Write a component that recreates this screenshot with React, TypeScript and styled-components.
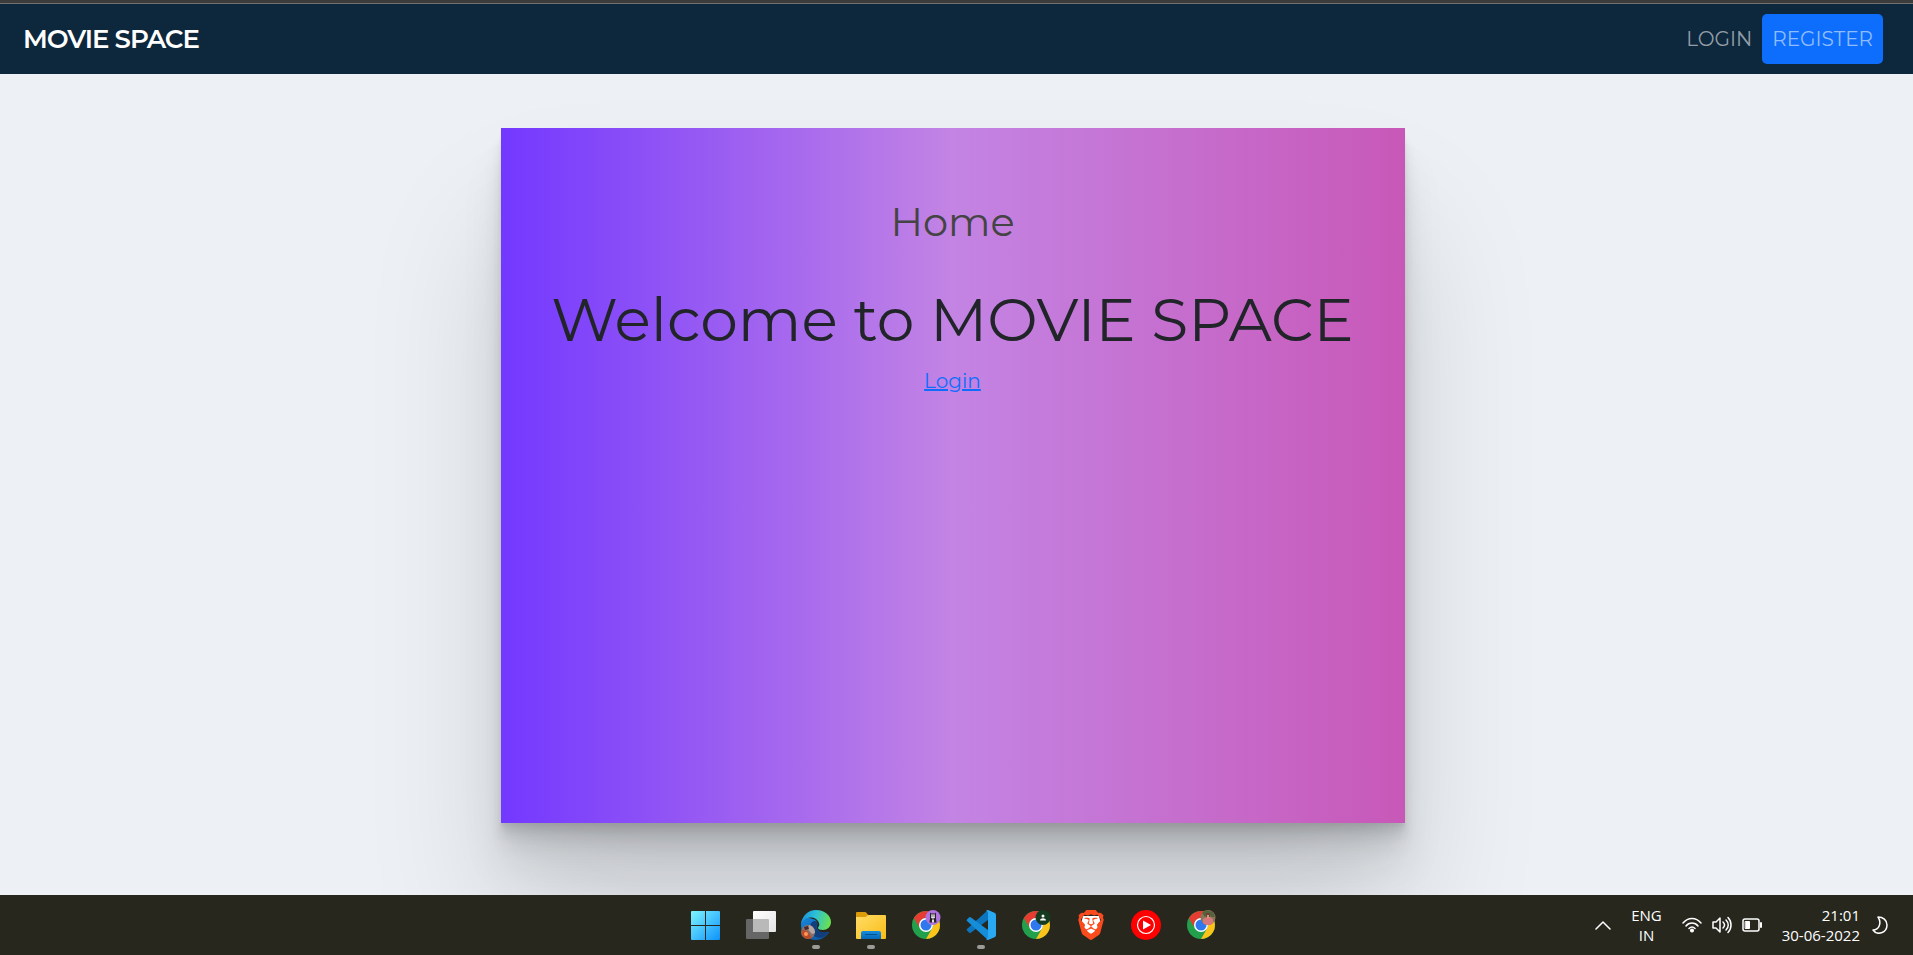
import React from 'react';
import styled, { createGlobalStyle } from 'styled-components';
import { SiBrave } from 'react-icons/si';

const GlobalStyle = createGlobalStyle`
  *, *::before, *::after { box-sizing: border-box; }
  body {
    margin: 0;
    background: #edf1f6;
    color: #212529;
    font-family: Montserrat, Inter, "Liberation Sans", sans-serif;
    font-weight: 400;
  }
`;

const Screen = styled.div`
  display: flex;
  flex-direction: column;
  min-height: 100vh;
`;

const WindowEdge = styled.div`
  height: 4px;
  background: #3c3c3c;
  border-bottom: 1px solid #717171;
`;

const NavBar = styled.nav`
  display: flex;
  align-items: center;
  justify-content: space-between;
  min-height: 70px;
  padding: 10px 30px 10px 23px;
  background: #0d273d;
`;

const Brand = styled.a`
  color: #fff;
  font-size: 26px;
  line-height: 40px;
  font-weight: 600;
  letter-spacing: -1px;
  text-decoration: none;
`;

const NavLinks = styled.div`
  display: flex;
  align-items: center;
`;

const NavLink = styled.a<{ $filled?: boolean }>`
  padding: 10px;
  border-radius: 5px;
  background: ${(p) => (p.$filled ? '#0d6efd' : 'transparent')};
  color: ${(p) => (p.$filled ? '#8fbcfc' : '#929da7')};
  font-size: 20px;
  line-height: 30px;
  font-weight: 400;
  text-decoration: none;
`;

const Main = styled.main`
  flex: 1;
  display: flex;
  justify-content: center;
  align-items: flex-start;
  padding: 54px 8px 72px 0;
  overflow: hidden;
`;

const Card = styled.section`
  width: min(904px, 100%);
  min-height: 695px;
  padding: 64px 20px;
  text-align: center;
  background: linear-gradient(90deg, #7338ff 0%, #c384e4 50%, #c858b8 100%);
  box-shadow:
    0 3px 2px rgba(0, 0, 0, 0.034),
    0 7px 5px rgba(0, 0, 0, 0.048),
    0 13px 10px rgba(0, 0, 0, 0.06),
    0 22px 18px rgba(0, 0, 0, 0.072),
    0 42px 40px rgba(0, 0, 0, 0.08),
    0 100px 130px rgba(0, 0, 0, 0.14);
`;

const PageTitle = styled.h2`
  margin: 0 0 28px;
  color: #444;
  font-size: 40px;
  line-height: 60px;
  font-weight: 400;
`;

const Welcome = styled.h1`
  margin: 0 0 6px;
  font-size: 60px;
  line-height: 80px;
  font-weight: 400;
`;

const LoginLink = styled.a`
  color: #0d6efd;
  font-size: 20px;
  line-height: 30px;
`;

const TaskBar = styled.footer`
  display: grid;
  grid-template-columns: 1fr auto 1fr;
  align-items: center;
  min-height: 60px;
  padding: 0 25px 0 18px;
  background: #27271e;
  color: #fff;
`;

const Apps = styled.div`
  grid-column: 2;
  display: flex;
  gap: 25px;
`;

const AppButton = styled.button<{ $open?: boolean }>`
  position: relative;
  display: flex;
  width: 30px;
  height: 30px;
  padding: 0;
  border: 0;
  background: none;

  &::after {
    content: '';
    display: ${(p) => (p.$open ? 'block' : 'none')};
    position: absolute;
    left: 11px;
    top: 35px;
    width: 8px;
    height: 4px;
    border-radius: 2px;
    background: #9b9b97;
  }
`;

const Tray = styled.div`
  display: flex;
  align-items: center;
  justify-content: flex-end;
  gap: 20px;
  font-family: "Open Sans", "Noto Sans", sans-serif;
  font-size: 15px;
  line-height: 20px;
  font-weight: 400;
`;

const TrayGroup = styled.div<{ $gap: number }>`
  display: flex;
  align-items: center;
  gap: ${(p) => p.$gap}px;
`;

const TrayText = styled.div<{ $align: 'center' | 'right' }>`
  display: flex;
  flex-direction: column;
  text-align: ${(p) => p.$align};
`;

const TraySvg = styled.svg`
  display: block;
  fill: none;
  stroke: #fff;
  stroke-width: 1.5;
  stroke-linecap: round;
  stroke-linejoin: round;
`;

const BraveMark = styled.span`
  position: relative;
  display: flex;
  width: 30px;
  height: 30px;
  color: #fb4a1c;

  svg { position: absolute; inset: 0; }
`;

const AppSvg = ({ children }: { children: React.ReactNode }) => (
  <svg width="30" height="30" viewBox="0 0 30 30" overflow="visible" aria-hidden="true">
    {children}
  </svg>
);

const WindowsIcon = () => (
  <AppSvg>
    <defs>
      <linearGradient id="win" gradientUnits="userSpaceOnUse" x1="1" y1="1" x2="29" y2="29">
        <stop offset="0" stopColor="#7df3ff" />
        <stop offset="1" stopColor="#0f94fb" />
      </linearGradient>
    </defs>
    <path fill="url(#win)" d="M1 1h13v14H0V2a1 1 0 0 1 1-1zM15 1h13a1 1 0 0 1 1 1v13H15zM0 16h14v14H1a1 1 0 0 1-1-1zM15 16h14v13a1 1 0 0 1-1 1H15z" />
  </AppSvg>
);

const TaskViewIcon = () => (
  <AppSvg>
    <defs>
      <linearGradient id="tv" x1="0" y1="0" x2="1" y2="1">
        <stop offset="0" stopColor="#fff" />
        <stop offset="1" stopColor="#e4e4e4" />
      </linearGradient>
    </defs>
    <rect x="0" y="9" width="23" height="20" rx="1" fill="#666" />
    <rect x="7" y="1" width="23" height="21" rx="1" fill="url(#tv)" />
    <path d="M7 9h15a1 1 0 0 1 1 1v12H8a1 1 0 0 1-1-1z" fill="#b9b9b9" />
  </AppSvg>
);

const EdgeIcon = () => (
  <AppSvg>
    <defs>
      <linearGradient id="edgeTop" x1="0" y1="0.3" x2="1" y2="0.5">
        <stop offset="0" stopColor="#1b8fd8" />
        <stop offset="0.45" stopColor="#2cc0d9" />
        <stop offset="1" stopColor="#6be14c" />
      </linearGradient>
      <linearGradient id="edgeLow" x1="0" y1="0" x2="1" y2="1">
        <stop offset="0" stopColor="#1787dc" />
        <stop offset="1" stopColor="#0c4f97" />
      </linearGradient>
    </defs>
    <path fill="url(#edgeLow)" d="M0 15C0 7 8 7 12 9c4 1 5 4 4 7-1 5 5 8 11 6 2 0 0 2-1 3-3 3-7 5-11 5C7 30 0 24 0 15z" />
    <path fill="#123e7d" d="M9 17c0-3 2-6 5-6 2 0 3 2 2 4-2 5 4 9 11 7 1 0-1 3-3 4-7 5-15-1-15-9z" />
    <path fill="url(#edgeTop)" d="M0 14C1 6 7 0 15 0c9 0 15 6 15 12 0 5-4 8-8 8-3 0-5-1-5-2s2-2 1-5C16 6 4 5 0 14z" />
    <circle cx="7" cy="22" r="7" fill="#85716b" />
    <path fill="#bba7a2" d="M8 15c4 1 6 4 6 8l-3 1-4-5z" />
    <path fill="#be4925" d="M1 20l5 1 3 4 2 3c-4 2-9 0-10-4z" />
    <circle cx="5" cy="24" r="2" fill="#ff965c" />
    <path fill="#4a2529" d="M3 17l4-1 1 3-4 1z" />
  </AppSvg>
);

const FolderIcon = () => (
  <AppSvg>
    <defs>
      <linearGradient id="folder" x1="0" y1="0" x2="1" y2="1">
        <stop offset="0" stopColor="#ffdc67" />
        <stop offset="1" stopColor="#f9bd16" />
      </linearGradient>
      <linearGradient id="tray" x1="0" y1="0" x2="0" y2="1">
        <stop offset="0" stopColor="#168ddd" />
        <stop offset="1" stopColor="#0667b8" />
      </linearGradient>
    </defs>
    <path fill="#dc9b08" d="M1 2h8c2 0 2 3 4 3h-1v5H0V3a1 1 0 0 1 1-1z" />
    <path fill="url(#folder)" d="M0 7h9c2 0 2-2 4-2h16a1 1 0 0 1 1 1v22a1 1 0 0 1-1 1H1a1 1 0 0 1-1-1z" />
    <path fill="url(#tray)" d="M5 29v-6a2 2 0 0 1 2-2h16a2 2 0 0 1 2 2v6z" />
    <path stroke="#07508e" d="M9 24.500h12" />
  </AppSvg>
);

const ChromeIcon = ({ children }: { children: React.ReactNode }) => (
  <AppSvg>
    <circle cx="15" cy="15" r="14" fill="#23a04c" />
    <path fill="#e63c31" d="M2.876 8A14 14 0 0 1 27.124 8H15a7 7 0 0 0-6.062 10.500z" />
    <path fill="#fcc419" d="M27.124 8A14 14 0 0 1 15 29l6.062-10.500A7 7 0 0 0 15 8z" />
    <circle cx="15" cy="15" r="7" fill="#fff" />
    <circle cx="15" cy="15" r="5.500" fill="#2f78ed" />
    {children}
  </AppSvg>
);

const CatBadge = () => (
  <g>
    <circle cx="22" cy="7.500" r="7.500" fill="#b073e2" />
    <path fill="#232027" d="M19 2.500l1 1h4l1-1v6l.5 4h-7l.5-4z" />
    <path fill="#e5e1e5" d="M20 4.500h4v3l-1 1h-2l-1-1zM21 9.500h2v3h-2z" />
    <path fill="#232027" d="M20.500 5.500h1v1h-1zM22.500 5.500h1v1h-1z" />
  </g>
);

const PersonBadge = () => (
  <g>
    <circle cx="22" cy="7.500" r="7.500" fill="#153b20" />
    <circle cx="22" cy="6" r="1.500" fill="#fff" />
    <path fill="#fff" d="M19 10.500c0-3 6-3 6 0z" />
  </g>
);

const PhotoBadge = () => (
  <g>
    <circle cx="22" cy="7.500" r="7.500" fill="#8a7658" />
    <path fill="#55633c" d="M16 3l4-3 7 2 2 5h-4l-2-4-4 4z" />
    <path fill="#6b4434" d="M20 3h4v5h-4z" />
    <path fill="#d9787a" d="M17 9l4-2h3l3 2v4c-3 3-7 3-10 0z" />
    <path fill="#c99d83" d="M21 5h2v3h-2z" />
  </g>
);

const CodeIcon = () => (
  <AppSvg>
    <path fill="#0b74bd" d="M1 20.500l2 2q1 1 2 0L22 10V0L1 19q-1 1 0 1.500z" />
    <path fill="#168dd8" d="M1 9.500l2-2q1-1 2 0L22 20v10L1 11q-1-1 0-1.500z" />
    <path fill="#2aa9f3" d="M22 0l7 3q1 1 1 2v20q0 1-1 2l-7 3q-1 0-2-1 2 0 2-2V3q0-2-2-2 1-1 2-1z" />
  </AppSvg>
);

const BraveIcon = () => (
  <BraveMark>
    <AppSvg>
      <path fill="#fff" d="M7 6h16l2 8-4 9-6 4-6-4-4-9z" />
    </AppSvg>
    <SiBrave size={30} />
  </BraveMark>
);

const MusicIcon = () => (
  <AppSvg>
    <circle cx="15" cy="15" r="15" fill="#fe0000" />
    <circle cx="15" cy="15" r="8.500" fill="none" stroke="#fff" strokeWidth="1.200" />
    <path fill="#fff" d="M12 10.500l8 4.500-8 4.500z" />
  </AppSvg>
);

const apps = [
  { name: 'Start', open: false, icon: <WindowsIcon /> },
  { name: 'Task view', open: false, icon: <TaskViewIcon /> },
  { name: 'Edge', open: true, icon: <EdgeIcon /> },
  { name: 'File Explorer', open: true, icon: <FolderIcon /> },
  { name: 'Chrome', open: false, icon: <ChromeIcon><CatBadge /></ChromeIcon> },
  { name: 'Visual Studio Code', open: true, icon: <CodeIcon /> },
  { name: 'Chrome, second profile', open: false, icon: <ChromeIcon><PersonBadge /></ChromeIcon> },
  { name: 'Brave', open: false, icon: <BraveIcon /> },
  { name: 'YouTube Music', open: false, icon: <MusicIcon /> },
  { name: 'Chrome, third profile', open: false, icon: <ChromeIcon><PhotoBadge /></ChromeIcon> },
];

export default function App() {
  return (
    <Screen>
      <GlobalStyle />
      <WindowEdge />
      <NavBar>
        <Brand href="#home">MOVIE SPACE</Brand>
        <NavLinks>
          <NavLink href="#login">LOGIN</NavLink>
          <NavLink href="#register" $filled>REGISTER</NavLink>
        </NavLinks>
      </NavBar>
      <Main>
        <Card>
          <PageTitle>Home</PageTitle>
          <Welcome>Welcome to MOVIE SPACE</Welcome>
          <LoginLink href="#login">Login</LoginLink>
        </Card>
      </Main>
      <TaskBar>
        <Apps>
          {apps.map((app) => (
            <AppButton key={app.name} type="button" aria-label={app.name} $open={app.open}>
              {app.icon}
            </AppButton>
          ))}
        </Apps>
        <Tray>
          <TraySvg width="16" height="10" viewBox="0 0 16 10" aria-hidden="true">
            <path d="M1 9l7-7 7 7" />
          </TraySvg>
          <TrayText $align="center">
            <span>ENG</span>
            <span>IN</span>
          </TrayText>
          <TrayGroup $gap={10}>
            <TraySvg width="20" height="16" viewBox="0 0 20 16" aria-hidden="true">
              <path d="M1 6c5-6 13-6 18 0M4 9c3-4 9-4 12 0M7 11.500c2-2 4-2 6 0" />
              <circle cx="10" cy="13.500" r="1.300" fill="#fff" />
            </TraySvg>
            <TraySvg width="20" height="18" viewBox="0 0 20 18" aria-hidden="true">
              <path d="M1 6h3l4-4v14l-4-4H1zM11 6c2 2 2 4 0 6M14 4c3 3 3 7 0 10M16 1.500c4 4 4 11 0 15" />
            </TraySvg>
            <TraySvg width="20" height="14" viewBox="0 0 20 14" aria-hidden="true">
              <rect x="1" y="1" width="16" height="12" rx="2" />
              <path d="M3.500 3.500h4v7h-4z" fill="#fff" strokeWidth="1" />
              <path d="M19 5v4" strokeWidth="2" />
            </TraySvg>
          </TrayGroup>
          <TrayGroup $gap={12}>
            <TrayText $align="right">
              <span>21:01</span>
              <span>30-06-2022</span>
            </TrayText>
            <TraySvg width="16" height="18" viewBox="0 0 16 18" aria-hidden="true">
              <path d="M6 1c5 0 9 3 9 8 0 8-10 11-14 5 6 0 9-7 5-13z" />
            </TraySvg>
          </TrayGroup>
        </Tray>
      </TaskBar>
    </Screen>
  );
}
